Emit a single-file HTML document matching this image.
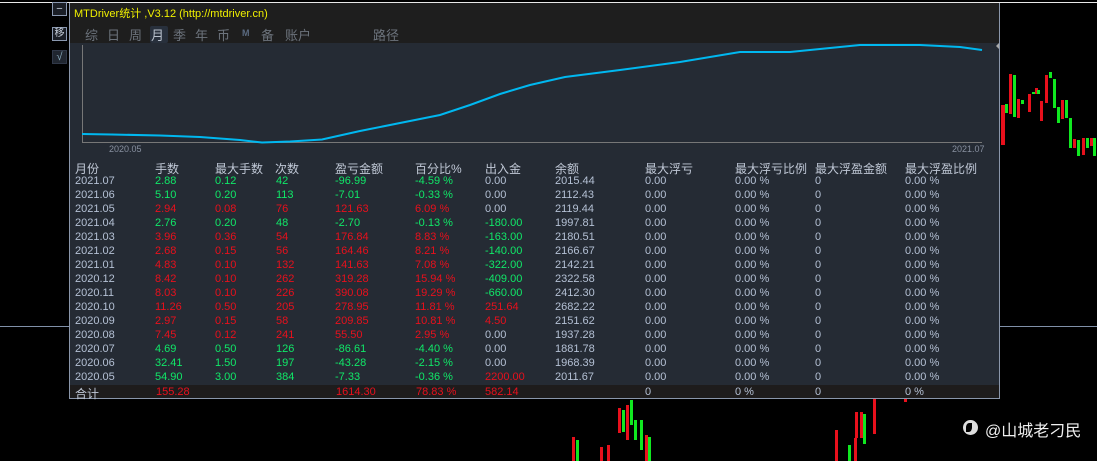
<!DOCTYPE html>
<html><head><meta charset="utf-8"><style>
*{margin:0;padding:0;box-sizing:border-box}
body{width:1097px;height:461px;background:#000;position:relative;overflow:hidden;font-family:"Liberation Sans","Noto Sans CJK SC",sans-serif;font-size:11px;color:#b4c0d4}
.a{position:absolute;white-space:nowrap}
.g{color:#10e868}.r{color:#e8101c}
.btn{position:absolute;left:52px;width:15px;height:14px;border:1px solid #8a98b0;background:#1a1e26;color:#c8d0dc;font-size:11px;line-height:12px;text-align:center}
.t{position:absolute;top:25px;color:#6c737c;font-size:13px}
</style></head><body>
<div class="a" style="left:0;top:2px;width:1097px;height:1px;background:#e8e8e8"></div>
<div class="a" style="left:0;top:326px;width:1097px;height:1px;background:#8090a8"></div>
<svg class="a" style="left:0;top:0" width="1097" height="461">
<g fill="#e8101c"><rect x="1001" y="105" width="4" height="40"/><rect x="1009" y="74" width="3" height="40"/><rect x="1017" y="99" width="3" height="19"/><rect x="1028" y="94" width="3" height="18"/><rect x="1035" y="88" width="3" height="6"/><rect x="1040" y="101" width="3" height="20"/><rect x="1045" y="75" width="3" height="28"/><rect x="1061" y="100" width="3" height="19"/><rect x="1073" y="139" width="3" height="9"/><rect x="1082" y="138" width="3" height="17"/><rect x="1090" y="138" width="3" height="8"/></g>
<g fill="#10e820"><rect x="1005" y="104" width="3" height="9"/><rect x="1013" y="75" width="3" height="42"/><rect x="1021" y="100" width="3" height="4"/><rect x="1032" y="92" width="3" height="2"/><rect x="1037" y="90" width="3" height="4"/><rect x="1049" y="72" width="3" height="6"/><rect x="1053" y="79" width="3" height="29"/><rect x="1057" y="107" width="3" height="16"/><rect x="1065" y="100" width="3" height="18"/><rect x="1069" y="118" width="3" height="30"/><rect x="1077" y="140" width="3" height="16"/><rect x="1086" y="138" width="3" height="10"/><rect x="1093" y="138" width="3" height="18"/></g>
<g fill="#e8101c"><rect x="572" y="437" width="3" height="24"/><rect x="607" y="445" width="3" height="16"/><rect x="618" y="408" width="3" height="25"/><rect x="626" y="405" width="3" height="35"/><rect x="645" y="435" width="3" height="26"/><rect x="600" y="447" width="3" height="14"/><rect x="835" y="430" width="3" height="31"/><rect x="855" y="412" width="3" height="26"/><rect x="860" y="412" width="3" height="26"/><rect x="873" y="398" width="3" height="36"/><rect x="854" y="438" width="3" height="23"/><rect x="904" y="398" width="3" height="4"/></g>
<g fill="#10e820"><rect x="576" y="440" width="3" height="21"/><rect x="622" y="410" width="3" height="22"/><rect x="630" y="400" width="3" height="25"/><rect x="634" y="420" width="3" height="20"/><rect x="640" y="420" width="3" height="30"/><rect x="648" y="437" width="3" height="24"/><rect x="863" y="414" width="3" height="30"/><rect x="848" y="445" width="3" height="16"/></g>
</svg>
<div class="btn" style="top:2px">−</div>
<div class="btn" style="top:27px;font-size:10px">移</div>
<div class="btn" style="top:50px;border-color:#303848;background:#202630;color:#8ab">√</div>
<div class="a" style="left:69px;top:3px;width:931px;height:396px;background:#1e1e1e;border-left:1px solid #8a96aa;border-right:1px solid #8a96aa;border-bottom:1px solid #8a96aa"></div>
<div class="a" style="left:70px;top:43px;width:929px;height:342px;background:#252b34"></div>
<div class="a" style="left:70px;top:385px;width:929px;height:13px;background:#1e1c1c"></div>
<div class="a" style="left:74px;top:5px;color:#f0f000;font-size:11px">MTDriver统计 ,V3.12 (http://mtdriver.cn)</div>
<div class="a" style="left:150px;top:26px;width:18px;height:17px;background:#28303c;border-radius:2px"></div>
<div class="t" style="left:85px">综</div>
<div class="t" style="left:107px">日</div>
<div class="t" style="left:129px">周</div>
<div class="t" style="left:151px;color:#b8c0cc">月</div>
<div class="t" style="left:173px">季</div>
<div class="t" style="left:195px">年</div>
<div class="t" style="left:217px">币</div>
<div class="t" style="left:242px;top:28px;font-size:9px;color:#5a6a80;font-weight:bold">M</div>
<div class="t" style="left:261px">备</div>
<div class="t" style="left:285px">账户</div>
<div class="t" style="left:373px">路径</div>
<svg class="a" style="left:0;top:0" width="1000" height="160">
<line x1="82.5" y1="45" x2="82.5" y2="143" stroke="#777" stroke-width="1"/>
<line x1="82" y1="142.5" x2="982" y2="142.5" stroke="#777" stroke-width="1"/>
<polyline fill="none" stroke="#00b8f0" stroke-width="2" points="82,134 112,134.5 160,135.5 200,137 240,140 262,142.5 290,141.5 322,139.5 360,131 400,123 440,115 470,105 500,94 530,85 565,77 620,70 680,62 740,52 790,52 860,45 920,45 960,47 982,50"/>
<polygon points="996,46 999,43 999,49" fill="#aaa"/>
</svg>
<div class="a" style="left:109px;top:144px;color:#8890a0;font-size:9px">2020.05</div>
<div class="a" style="left:952px;top:144px;color:#8890a0;font-size:9px">2021.07</div>
<div class="a" style="left:75px;top:160px;font-size:12px;color:#c0c8d6">月份</div>
<div class="a" style="left:155px;top:160px;font-size:12px;color:#c0c8d6">手数</div>
<div class="a" style="left:215px;top:160px;font-size:12px;color:#c0c8d6">最大手数</div>
<div class="a" style="left:275px;top:160px;font-size:12px;color:#c0c8d6">次数</div>
<div class="a" style="left:335px;top:160px;font-size:12px;color:#c0c8d6">盈亏金额</div>
<div class="a" style="left:415px;top:160px;font-size:12px;color:#c0c8d6">百分比%</div>
<div class="a" style="left:485px;top:160px;font-size:12px;color:#c0c8d6">出入金</div>
<div class="a" style="left:555px;top:160px;font-size:12px;color:#c0c8d6">余额</div>
<div class="a" style="left:645px;top:160px;font-size:12px;color:#c0c8d6">最大浮亏</div>
<div class="a" style="left:735px;top:160px;font-size:12px;color:#c0c8d6">最大浮亏比例</div>
<div class="a" style="left:815px;top:160px;font-size:12px;color:#c0c8d6">最大浮盈金额</div>
<div class="a" style="left:905px;top:160px;font-size:12px;color:#c0c8d6">最大浮盈比例</div>
<div id="rows"></div>
<script>
var d=[["2021.07","2.88","0.12","42","-96.99","-4.59 %","0.00","2015.44"],["2021.06","5.10","0.20","113","-7.01","-0.33 %","0.00","2112.43"],["2021.05","2.94","0.08","76","121.63","6.09 %","0.00","2119.44"],["2021.04","2.76","0.20","48","-2.70","-0.13 %","-180.00","1997.81"],["2021.03","3.96","0.36","54","176.84","8.83 %","-163.00","2180.51"],["2021.02","2.68","0.15","56","164.46","8.21 %","-140.00","2166.67"],["2021.01","4.83","0.10","132","141.63","7.08 %","-322.00","2142.21"],["2020.12","8.42","0.10","262","319.28","15.94 %","-409.00","2322.58"],["2020.11","8.03","0.10","226","390.08","19.29 %","-660.00","2412.30"],["2020.10","11.26","0.50","205","278.95","11.81 %","251.64","2682.22"],["2020.09","2.97","0.15","58","209.85","10.81 %","4.50","2151.62"],["2020.08","7.45","0.12","241","55.50","2.95 %","0.00","1937.28"],["2020.07","4.69","0.50","126","-86.61","-4.40 %","0.00","1881.78"],["2020.06","32.41","1.50","197","-43.28","-2.15 %","0.00","1968.39"],["2020.05","54.90","3.00","384","-7.33","-0.36 %","2200.00","2011.67"]];
var xs=[75,155,215,276,335,415,485,555],h="";
d.forEach(function(r,i){var y=175+i*14,c=r[4][0]=="-"?"g":"r";
for(var j=0;j<8;j++){var cl="";if(j>=1&&j<=5)cl=c;if(j==6){cl=r[6]=="0.00"?"":(r[6][0]=="-"?"g":"r")}
h+='<div class="a '+cl+'" style="left:'+xs[j]+'px;top:'+y+'px">'+r[j]+'</div>'}
h+='<div class="a" style="left:645px;top:'+y+'px">0.00</div><div class="a" style="left:735px;top:'+y+'px">0.00 %</div><div class="a" style="left:815px;top:'+y+'px">0</div><div class="a" style="left:905px;top:'+y+'px">0.00 %</div>'});
document.getElementById("rows").innerHTML=h;
</script>
<div class="a" style="left:75px;top:385px;font-size:12px;color:#c0c8d6">合计</div>
<div class="a r" style="left:156px;top:386px">155.28</div>
<div class="a r" style="left:336px;top:386px">1614.30</div>
<div class="a r" style="left:416px;top:386px">78.83 %</div>
<div class="a r" style="left:485px;top:386px">582.14</div>
<div class="a" style="left:645px;top:386px">0</div>
<div class="a" style="left:735px;top:386px">0 %</div>
<div class="a" style="left:815px;top:386px">0</div>
<div class="a" style="left:905px;top:386px">0 %</div>
<div class="a" style="left:963px;top:420px;width:15px;height:15px;border-radius:50%;background:#ddd"></div>
<div class="a" style="left:966px;top:423px;width:6px;height:9px;background:#000;border-radius:50% 0 50% 0"></div>
<div class="a" style="left:985px;top:417px;color:#f0f0f0;font-size:16px">@山城老刁民</div>
</body></html>
